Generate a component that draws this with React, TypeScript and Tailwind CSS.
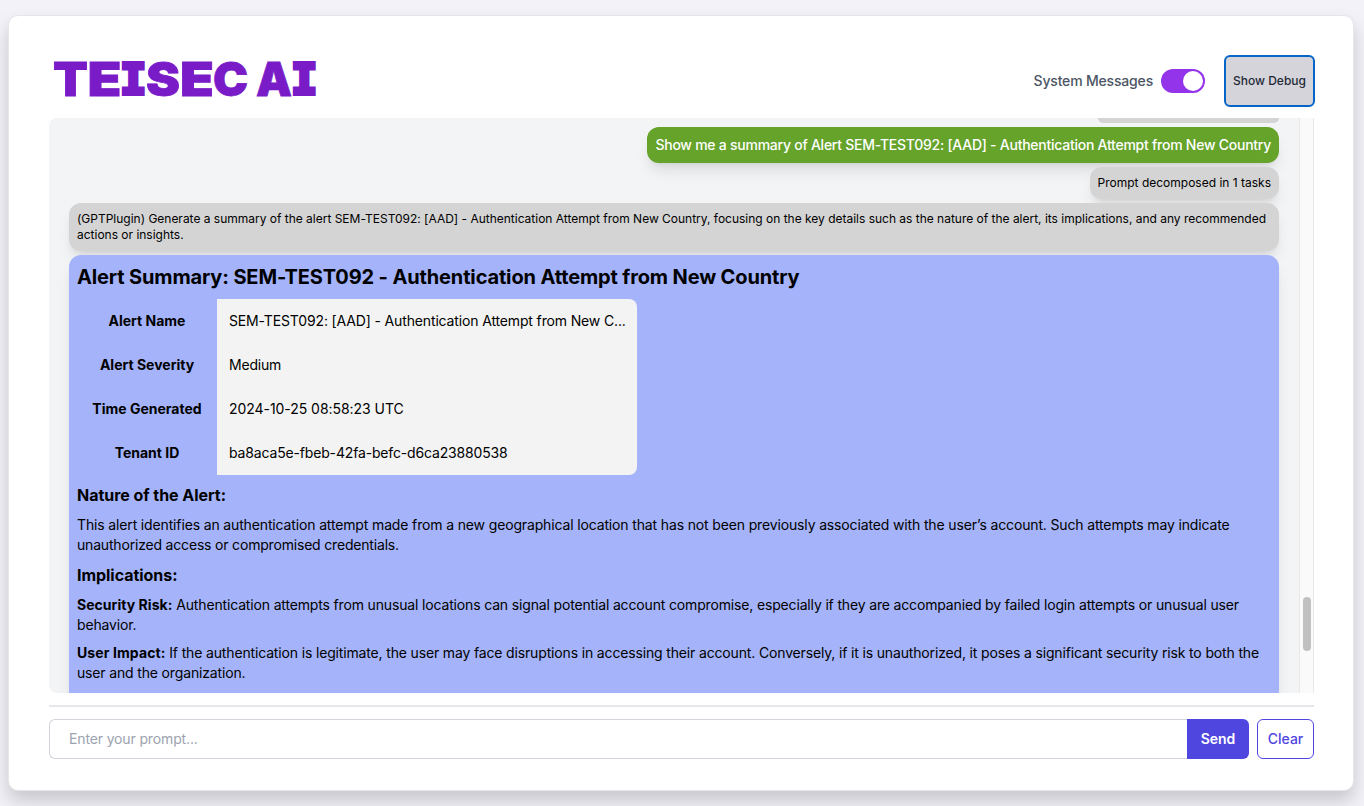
import React from "react";

const letters: [string, number, number][] = [
  ["T", 53, 35],
  ["E", 87.5, 34],
  ["S", 146, 34],
  ["E", 180, 34],
  ["C", 213, 35],
  ["A", 256, 36],
];

function Logo() {
  return (
    <svg className="h-[76px] w-[272px] shrink-0 overflow-visible" viewBox="49 43 272 76" role="img" aria-label="TEISEC AI">
      <g fill="#7a1bc8" stroke="#7a1bc8">
        {letters.map(([c, x, w]) => (
          <text key={x} x={x} y="95.9" fontSize="47" strokeWidth="0.8" className="font-['Inter',sans-serif] font-black" textLength={w} lengthAdjust="spacingAndGlyphs">
            {c}
          </text>
        ))}
        {[120.3, 291.3].map((x) => (
          <text key={x} x={x} y="94.4" fontSize="42" strokeWidth="4" className="font-['DejaVu_Sans_Mono',monospace] font-bold" textLength="26" lengthAdjust="spacingAndGlyphs">
            I
          </text>
        ))}
      </g>
    </svg>
  );
}

const rows = [
  ["Alert Name", "SEM-TEST092: [AAD] - Authentication Attempt from New C...", "tracking-[-0.145px]"],
  ["Alert Severity", "Medium", "tracking-[-0.2px]"],
  ["Time Generated", "2024-10-25 08:58:23 UTC", "tracking-[-0.05px]"],
  ["Tenant ID", "ba8aca5e-fbeb-42fa-befc-d6ca23880538", "tracking-[-0.16px]"],
];

export default function App() {
  return (
    <div className="h-[806px] w-[1364px] overflow-hidden bg-[#f3f2f8] pt-[15px] pl-2 font-['Inter',sans-serif] text-black">
      <main className="flex h-[776px] w-[1346px] flex-col rounded-[10px] border border-[#e5e5ea] bg-white px-10 pt-[39px] shadow-[0_10px_18px_rgba(0,0,0,0.18)]">
        <header className="flex h-[52px] shrink-0 items-center">
          <Logo />
          <div className="-mr-0.5 ml-auto flex items-center">
            <span className="text-sm font-medium tracking-[-0.18px] whitespace-nowrap text-[#4b5563]">System Messages</span>
            <span className="ml-2 flex h-6 w-11 items-center justify-end rounded-full bg-[#9333ea] p-0.5">
              <span className="size-5 rounded-full bg-white" />
            </span>
            <button className="ml-[19px] h-[52px] w-[91px] rounded-md border-2 border-[#0565c8] bg-[#d4d4da] text-xs font-medium whitespace-nowrap text-[#1f2937]">
              Show Debug
            </button>
          </div>
        </header>

        <section className="mt-[11px] flex h-[575px] w-[1265px] shrink-0 overflow-hidden rounded-l-lg bg-[#f3f4f6]">
          <div className="flex w-[1250px] flex-col items-end pr-5 pl-5">
            <div className="h-[5px] w-[181px] shrink-0 rounded-b-xl bg-[#d4d4d4] shadow-lg" />
            <div className="mt-1 flex h-9 shrink-0 items-center rounded-xl bg-[#65a32b] px-2 text-sm font-medium tracking-[-0.252px] whitespace-nowrap text-white shadow-lg">
              Show me a summary of Alert SEM-TEST092: [AAD] - Authentication Attempt from New Country
            </div>
            <div className="mt-1 flex h-8 shrink-0 items-center rounded-xl bg-[#d4d4d4] px-2 text-xs whitespace-nowrap shadow-lg">
              Prompt decomposed in 1 tasks
            </div>
            <div className="mt-1 h-12 w-full shrink-0 rounded-xl bg-[#d4d4d4] p-2 text-xs tracking-[-0.011px] whitespace-nowrap shadow-lg">
              (GPTPlugin) Generate a summary of the alert SEM-TEST092: [AAD] - Authentication Attempt from New Country, focusing on the key details such as the nature of the alert, its implications, and any recommended
              <br />
              actions or insights.
            </div>
            <article className="mt-1 h-[460px] w-full shrink-0 rounded-t-xl bg-[#a5b4fa] px-2 pt-2 text-sm shadow-lg">
              <h2 className="text-xl leading-7 font-bold tracking-[-0.135px]">Alert Summary: SEM-TEST092 - Authentication Attempt from New Country</h2>
              <div className="mt-2 w-[560px] overflow-hidden rounded-lg">
                {rows.map(([k, v, tracking]) => (
                  <div key={k} className="flex h-11">
                    <div className="flex w-[140px] items-center justify-center font-bold whitespace-nowrap">{k}</div>
                    <div className={`flex w-[420px] items-center bg-[#f3f3f3] pl-3 whitespace-nowrap ${tracking}`}>{v}</div>
                  </div>
                ))}
              </div>
              <h3 className="mt-2 text-base leading-6 font-bold tracking-[-0.04px]">Nature of the Alert:</h3>
              <p className="mt-2 leading-5 tracking-[-0.145px] whitespace-nowrap">
                This alert identifies an authentication attempt made from a new geographical location that has not been previously associated with the user’s account. Such attempts may indicate
                <br />
                <span className="tracking-[-0.185px]">unauthorized access or compromised credentials.</span>
              </p>
              <h3 className="mt-2 text-base leading-6 font-bold tracking-[-0.04px]">Implications:</h3>
              <p className="mt-2 leading-5 tracking-[-0.157px] whitespace-nowrap">
                <b className="tracking-[0.04px]">Security Risk:</b> Authentication attempts from unusual locations can signal potential account compromise, especially if they are accompanied by failed login attempts or unusual user
                <br />
                behavior.
              </p>
              <p className="mt-2 leading-5 tracking-[-0.155px] whitespace-nowrap">
                <b className="tracking-[0.1px]">User Impact:</b> If the authentication is legitimate, the user may face disruptions in accessing their account. Conversely, if it is unauthorized, it poses a significant security risk to both the
                <br />
                user and the organization.
              </p>
            </article>
          </div>
          <div className="w-[15px] border-x border-[#e8e8e8] bg-[#fafafa] pt-[479px] pl-[3px]">
            <div className="h-[54px] w-2 rounded-full bg-[#c1c1c1]" />
          </div>
        </section>

        <hr className="mt-3 w-[1265px] border-t-2 border-[#e5e7eb]" />

        <form className="mt-3 flex h-10 w-[1265px] shrink-0 text-sm">
          <input className="h-10 w-[1138px] rounded-l-md border border-r-0 border-[#d1d5db] bg-white pb-0.5 pl-[19px] tracking-[-0.14px] placeholder:text-[#9ca3af]" placeholder="Enter your prompt..." />
          <button type="button" className="w-[62px] rounded-r-md bg-[#4f46e0] font-semibold text-white">
            Send
          </button>
          <button type="button" className="ml-2 w-[57px] rounded-md border border-[#4f46e0] font-medium text-[#4f46e0]">
            Clear
          </button>
        </form>
      </main>
    </div>
  );
}
